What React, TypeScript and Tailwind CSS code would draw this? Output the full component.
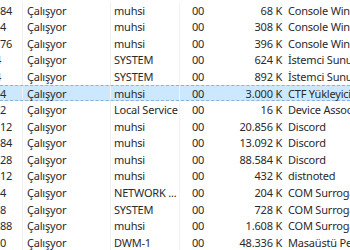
import React from 'react';

interface Row {
  pid: string;
  user: string;
  mem: string;
  desc: string;
  clip?: boolean;
}

const rows: Row[] = [
  { pid: '84', user: 'muhsi', mem: '68 K', desc: 'Console Window Host' },
  { pid: '4', user: 'muhsi', mem: '308 K', desc: 'Console Window Host' },
  { pid: '76', user: 'muhsi', mem: '396 K', desc: 'Console Window Host' },
  { pid: '4', user: 'SYSTEM', mem: '624 K', desc: 'İstemci Sunucu Çalışma', clip: true },
  { pid: '4', user: 'SYSTEM', mem: '892 K', desc: 'İstemci Sunucu Çalışma', clip: true },
  { pid: '4', user: 'muhsi', mem: '3.000 K', desc: 'CTF Yükleyici' },
  { pid: '2', user: 'Local Service', mem: '16 K', desc: 'Device Association' },
  { pid: '12', user: 'muhsi', mem: '20.856 K', desc: 'Discord' },
  { pid: '84', user: 'muhsi', mem: '13.092 K', desc: 'Discord' },
  { pid: '28', user: 'muhsi', mem: '88.584 K', desc: 'Discord' },
  { pid: '12', user: 'muhsi', mem: '432 K', desc: 'distnoted' },
  { pid: '4', user: 'NETWORK ...', mem: '204 K', desc: 'COM Surrogate' },
  { pid: '8', user: 'SYSTEM', mem: '728 K', desc: 'COM Surrogate' },
  { pid: '88', user: 'muhsi', mem: '1.608 K', desc: 'COM Surrogate' },
  { pid: '0', user: 'DWM-1', mem: '48.336 K', desc: 'Masaüstü Pencere' },
];

const SELECTED = 5;

export default function App() {
  return (
    <div
      className="w-[350px] h-[250px] overflow-hidden bg-white pt-[2px] text-[11px] tracking-[-0.2px] text-[#2a2a2a]"
      style={{ fontFamily: '"Noto Sans", "Open Sans", sans-serif' }}
    >
      {rows.map((r, i) => {
        const sel = i === SELECTED;
        return (
          <div
            key={i}
            className={
              sel
                ? 'flex h-[16.57px] items-center whitespace-nowrap bg-[#cce8ff] border-y border-dashed border-[#8fb3d6]'
                : 'flex h-[16.57px] items-center whitespace-nowrap'
            }
          >
            <div className="w-[22px] shrink-0 overflow-hidden leading-none">
              <span className={r.clip ? 'block -ml-[5px]' : 'block'}>{r.pid}</span>
            </div>
            <div className="w-px self-stretch shrink-0 bg-[#efefef]" />
            <div className="w-[87px] shrink-0 pl-[4px] leading-none">Çalışyor</div>
            <div className="w-px self-stretch shrink-0 bg-[#efefef]" />
            <div className="w-[68px] shrink-0 pl-[3px] leading-none">{r.user}</div>
            <div className="w-px self-stretch shrink-0 bg-[#f3f3f3]" />
            <div className="w-[24px] shrink-0 pl-[12px] leading-none">00</div>
            <div className="w-[78px] shrink-0 text-right leading-none">{r.mem}</div>
            <div className="pl-[6px] leading-none">{r.desc}</div>
          </div>
        );
      })}
    </div>
  );
}
